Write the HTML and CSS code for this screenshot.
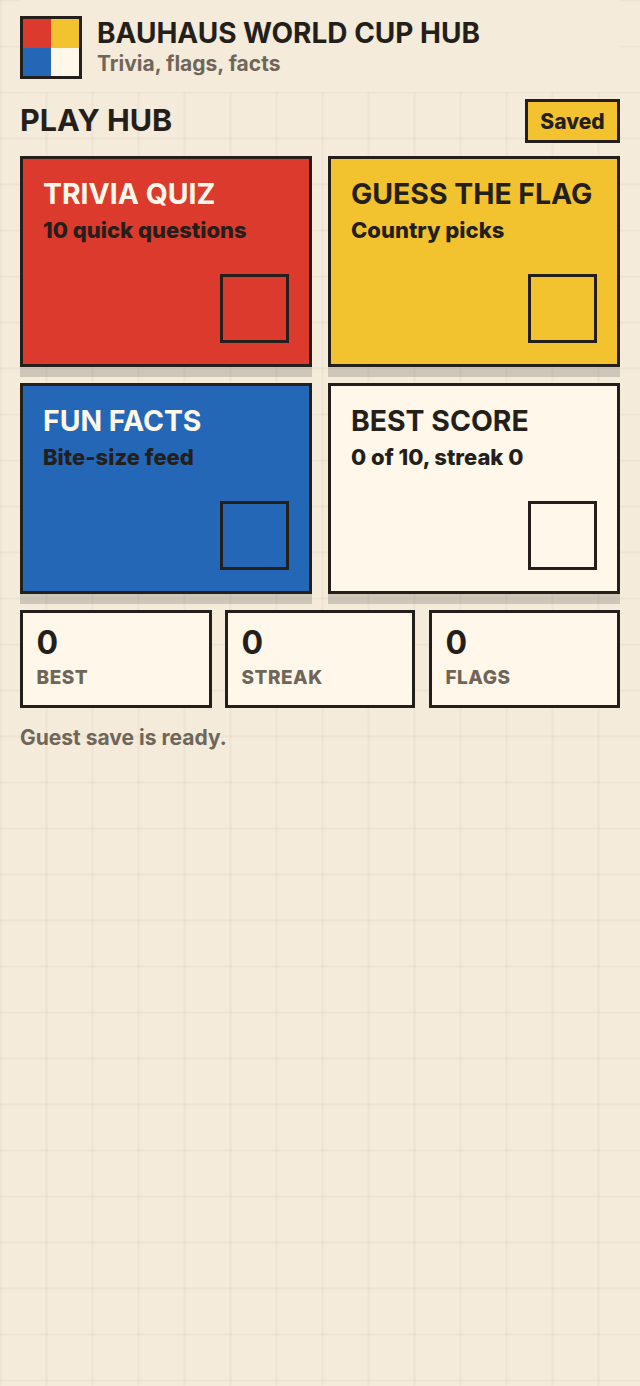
FILE: index.html
```html
<!DOCTYPE html>
<html lang="en">
<head>
<meta charset="utf-8">
<title>Bauhaus World Cup Hub</title>
<link rel="stylesheet" href="styles.css">
</head>
<body>
<header class="header">
  <div class="logo" aria-hidden="true">
    <span class="logo-cell red"></span>
    <span class="logo-cell yellow"></span>
    <span class="logo-cell blue"></span>
    <span class="logo-cell cream"></span>
  </div>
  <div class="brand">
    <h1 class="brand-title">BAUHAUS WORLD CUP HUB</h1>
    <p class="brand-sub">Trivia, flags, facts</p>
  </div>
</header>
<main class="main">
  <div class="section-head">
    <h2 class="section-title">PLAY HUB</h2>
    <span class="badge">Saved</span>
  </div>
  <div class="cards">
    <article class="card red light">
      <h3 class="card-title">TRIVIA QUIZ</h3>
      <p class="card-sub">10 quick questions</p>
      <div class="card-square"></div>
    </article>
    <article class="card yellow">
      <h3 class="card-title">GUESS THE FLAG</h3>
      <p class="card-sub">Country picks</p>
      <div class="card-square"></div>
    </article>
    <article class="card blue light">
      <h3 class="card-title">FUN FACTS</h3>
      <p class="card-sub">Bite-size feed</p>
      <div class="card-square"></div>
    </article>
    <article class="card cream">
      <h3 class="card-title">BEST SCORE</h3>
      <p class="card-sub">0 of 10, streak 0</p>
      <div class="card-square"></div>
    </article>
  </div>
  <div class="stats">
    <div class="stat"><div class="stat-value">0</div><div class="stat-label">BEST</div></div>
    <div class="stat"><div class="stat-value">0</div><div class="stat-label">STREAK</div></div>
    <div class="stat"><div class="stat-value">0</div><div class="stat-label">FLAGS</div></div>
  </div>
  <p class="status">Guest save is ready.</p>
</main>
</body>
</html>
```
FILE: styles.css
```css
* { box-sizing: border-box; }
html, body { margin: 0; padding: 0; }
body {
  width: 640px;
  min-height: 1386px;
  font-family: Inter, "Liberation Sans", sans-serif;
  color: #241f1a;
  background-color: #f4ebdb;
  background-image:
    linear-gradient(to right, rgba(36, 31, 26, .035) 2px, transparent 2px),
    linear-gradient(to bottom, rgba(36, 31, 26, .035) 2px, transparent 2px);
  background-size: 46px 46px;
  background-position: -0.5px -0.5px;
}
.red { background: #dc3a2d; }
.yellow { background: #f2c32e; }
.blue { background: #2467b7; }
.cream { background: #fff8ea; }

.header {
  height: 92px;
  margin: 0 20px;
  padding-top: 16px;
  display: flex;
  gap: 15px;
  background: #f4ebdb;
}
.logo {
  width: 62px;
  height: 63px;
  border: 3px solid #241f1a;
  display: grid;
  grid-template-columns: 1fr 1fr;
  grid-template-rows: 1fr 1fr;
}
.brand { padding-top: 1px; }
.brand-title {
  margin: 0;
  font-size: 28px;
  line-height: 32px;
  font-weight: 700;
}
.brand-sub {
  margin: 2px 0 0;
  font-size: 21px;
  line-height: 26px;
  font-weight: 700;
  color: #6f6659;
}

.main { padding: 7px 20px 0; }
.section-head {
  display: flex;
  justify-content: space-between;
  align-items: center;
  height: 44px;
  margin-bottom: 13px;
}
.section-title {
  margin: 0;
  font-size: 30.5px;
  line-height: 42px;
  height: 44px;
  font-weight: 700;
}
.badge {
  width: 95px;
  height: 44px;
  border: 3px solid #241f1a;
  background: #f2c32e;
  font-size: 21px;
  font-weight: 800;
  display: flex;
  align-items: center;
  justify-content: center;
}
.cards {
  display: grid;
  grid-template-columns: 1fr 1fr;
  gap: 16px;
}
.card {
  position: relative;
  height: 211px;
  border: 3px solid #241f1a;
  padding: 19px 20px;
  box-shadow: 0 10px 0 rgba(36, 31, 26, .18);
}
.card-title {
  margin: 0;
  font-size: 28.4px;
  line-height: 32px;
  font-weight: 700;
}
.card-sub {
  margin: 7px 0 0;
  font-size: 22px;
  line-height: 26px;
  font-weight: 800;
}
.light .card-title { color: #fff8ea; }
.card-square {
  position: absolute;
  right: 20px;
  bottom: 21px;
  width: 69px;
  height: 69px;
  border: 3px solid #241f1a;
}
.stats {
  display: grid;
  grid-template-columns: 192px 190px 1fr;
  gap: 13px;
  margin-top: 16px;
}
.stat {
  height: 98px;
  border: 3px solid #241f1a;
  background: #fff8ea;
  padding: 12px 13.5px;
}
.stat:last-child { margin-left: 1px; }
.stat-value {
  font-size: 32px;
  line-height: 36px;
  font-weight: 700;
}
.stat-label {
  margin-top: 5px;
  font-size: 19px;
  line-height: 24px;
  font-weight: 800;
  letter-spacing: .5px;
  color: #6f6659;
}
.status {
  margin: 17px 0 0;
  font-size: 21px;
  line-height: 26px;
  font-weight: 700;
  color: #6f6659;
}
```
